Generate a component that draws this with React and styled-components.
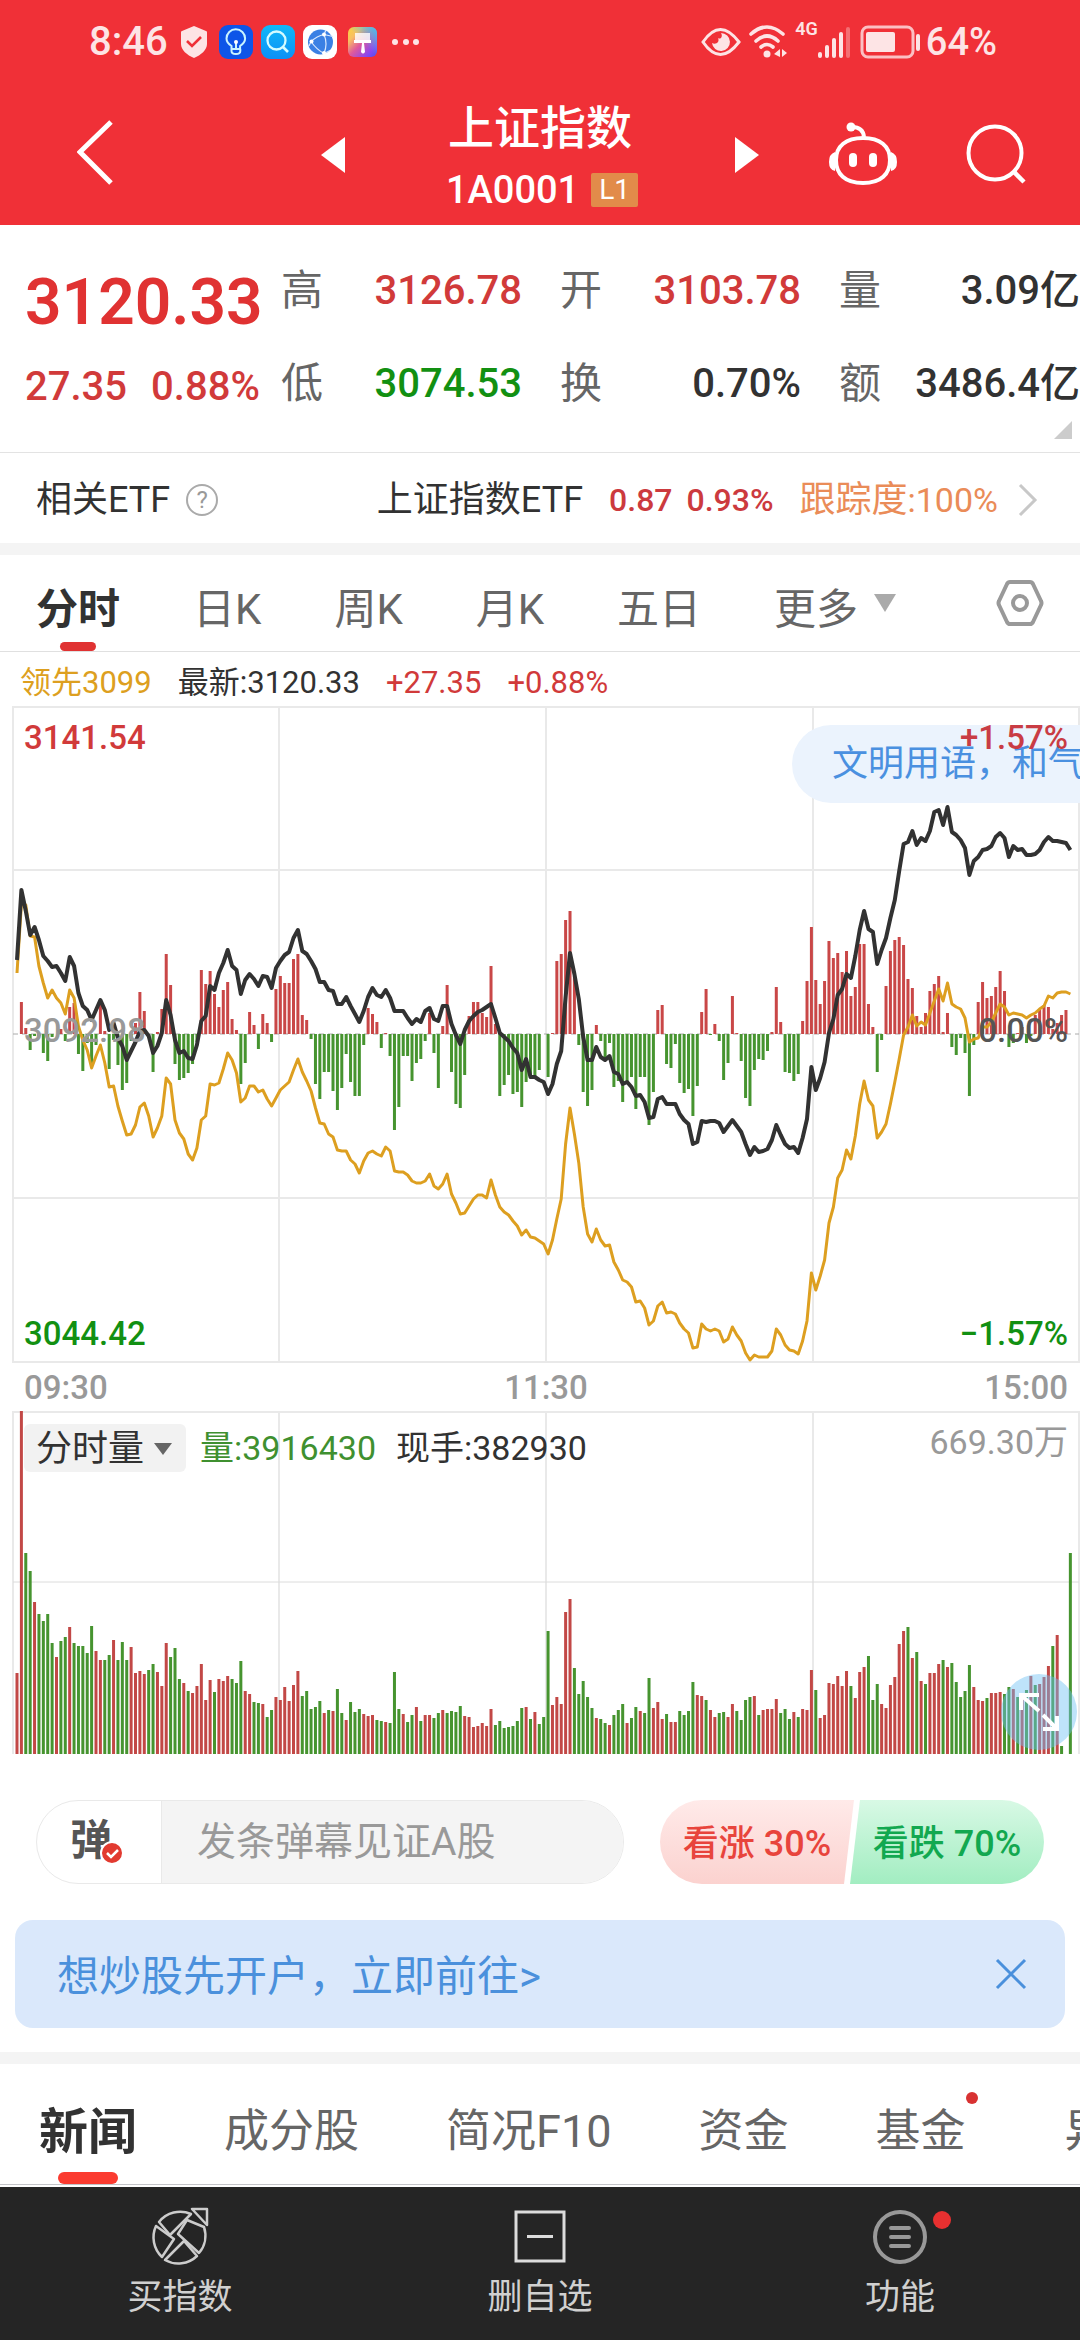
import styled, { createGlobalStyle } from "styled-components";

const PRICE = [
    74, 144, 123, 99, 107, 94, 78, 73, 67, 68, 61, 53, 77, 68, 41, 28, 24, 14, 24, 34,
    24, 4, 11, -4, -12, -26, -17, -8, 3, 4, -2, -19, -12, 1, 34, 19, -6, -19, -17, -24,
    -25, -11, 13, 18, 48, 44, 61, 71, 84, 68, 64, 40, 54, 60, 55, 48, 58, 57, 46, 66,
    73, 79, 82, 96, 104, 83, 80, 73, 65, 52, 52, 44, 43, 30, 30, 37, 28, 20, 12, 23,
    37, 46, 39, 37, 44, 36, 23, 23, 23, 16, 10, 15, 12, 23, 26, 15, 13, 28, 28, 10,
    -1, -10, 4, 13, 18, 22, 24, 27, 30, 16, 1, -3, -7, -14, -19, -36, -25, -43, -43, -46,
    -48, -60, -50, -30, -17, 37, 81, 60, 35, -3, -26, -26, -13, -23, -26, -22, -38, -40, -50, -48,
    -53, -62, -61, -68, -84, -83, -65, -63, -70, -70, -70, -80, -86, -90, -110, -108, -87, -88, -87, -87,
    -89, -98, -92, -86, -92, -98, -110, -121, -113, -118, -117, -115, -106, -91, -101, -110, -114, -113, -119, -104,
    -85, -33, -56, -44, -28, 1, 15, 39, 45, 60, 56, 78, 104, 123, 105, 102, 70, 84, 96, 116,
    134, 163, 190, 192, 203, 189, 196, 193, 203, 222, 224, 209, 227, 202, 199, 194, 186, 159, 173, 177,
    184, 185, 188, 197, 201, 196, 177, 188, 184, 185, 179, 179, 180, 184, 192, 197, 193, 193, 192, 191,
    184,
];

const LEADING = [
    61, 130, 129, 98, 97, 68, 51, 36, 44, 36, 31, 20, 44, 36, 8, -6, -16, -34, -22, -11,
    -29, -53, -52, -72, -87, -101, -100, -91, -73, -69, -82, -103, -94, -82, -44, -50, -86, -99, -105, -120,
    -126, -114, -86, -82, -50, -51, -49, -35, -19, -26, -39, -68, -64, -52, -52, -58, -56, -65, -72, -64,
    -56, -52, -48, -36, -25, -38, -47, -57, -74, -89, -90, -100, -103, -116, -117, -117, -126, -130, -139, -127,
    -119, -117, -120, -122, -113, -117, -137, -138, -138, -141, -147, -149, -149, -147, -140, -152, -155, -150, -140, -160,
    -169, -180, -179, -172, -165, -161, -161, -164, -146, -161, -173, -178, -181, -187, -192, -201, -196, -203, -204, -207,
    -210, -220, -206, -185, -165, -110, -74, -100, -129, -173, -200, -208, -195, -206, -212, -211, -228, -236, -246, -248,
    -253, -268, -267, -274, -291, -287, -272, -268, -279, -278, -280, -289, -295, -299, -314, -313, -290, -295, -297, -295,
    -297, -308, -305, -293, -301, -307, -319, -326, -321, -323, -323, -323, -317, -295, -301, -311, -316, -317, -320, -307,
    -287, -239, -256, -242, -226, -189, -173, -144, -136, -116, -125, -102, -70, -47, -66, -72, -104, -98, -90, -70,
    -48, -25, -1, 7, 19, 8, 12, 9, 21, 33, 45, 33, 51, 30, 27, 25, 16, -8, -5, -4,
    7, 7, 12, 21, 30, 27, 19, 21, 20, 19, 16, 19, 21, 25, 28, 38, 36, 41, 42, 42,
    40,
];

const MOMENTUM = [
    0, 32, 6, -16, -2, -2, -19, -27, -3, 0, 5, -7, 27, 31, -20, -37, -9, -32, -11, 29,
    3, -35, -6, -31, -56, -49, -7, 11, 42, 23, -4, -38, 2, 25, 80, 49, -30, -46, -44, -39,
    -30, -8, 64, 50, 63, 40, 27, 44, 52, 15, 4, -50, -29, 22, 9, -15, 20, 11, -8, 45,
    58, 51, 51, 75, 80, 19, 14, -5, -50, -65, -38, -38, -57, -76, -54, -20, -48, -62, -62, -11,
    26, 20, 12, -14, 1, -22, -96, -73, -22, -22, -47, -29, -25, -7, 21, -19, -54, 8, 49, -38,
    -70, -74, -41, 18, 32, 32, 21, 17, 68, 10, -62, -51, -41, -60, -58, -73, -48, -42, -43, -36,
    0, -43, 1, 73, 80, 114, 123, 58, -11, -58, -72, -56, 9, -7, -25, -9, -53, -47, -68, -50,
    -43, -75, -43, -43, -91, -58, 24, 29, -30, -34, -10, -49, -59, -55, -82, -52, 22, 45, -1, 10,
    -7, -46, -29, 38, 1, -27, -64, -72, -36, -25, -26, -17, 2, 47, 12, -38, -39, -47, -40, 13,
    53, 107, 54, 30, 53, 93, 76, 81, 62, 83, 38, 47, 90, 90, 30, 7, -38, -6, 48, 83,
    94, 97, 89, 55, 46, 18, 7, 21, 43, 50, 58, 2, 21, -13, -21, -4, -19, -62, -11, 32,
    52, 36, 38, 47, 63, 43, -13, -9, 1, 7, -9, -2, 19, 24, 29, 27, 5, 11, 19, 24,
    0,
];

// negative = traded on a falling minute
const VOLUME = [
    81, 343, -201, -183, 152, -140, -133, -140, -111, 97, -113, -117, 127, -111, -108, -108, -101, -128, 103, 94,
    -94, -99, 114, -94, -112, -94, 107, 81, 83, 80, -84, -90, 82, 68, 111, -97, -106, -75, 71, -63,
    61, 68, 90, 54, 74, -62, 75, 73, 78, -75, -71, -93, 63, 60, -52, -51, 50, -37, -44, 57,
    54, 67, 53, 69, 83, -58, -63, -45, -47, -53, 41, -44, 43, -65, -41, 34, -52, -42, -45, 40,
    38, 39, -34, -33, 32, -31, -82, -45, 40, -32, -39, 47, -33, 39, 39, -36, -41, 44, -41, -43,
    -42, -48, 38, 37, 27, 28, 31, 28, 45, -29, -33, -26, -27, -28, -33, -46, 47, -35, 42, -30,
    -37, -123, 49, 57, 50, 142, 155, -86, -60, -73, -57, -46, 36, -35, -31, 29, -39, -44, -50, 31,
    -36, -47, 43, -41, -76, 46, 52, 35, -40, 32, 32, -43, -39, -43, -72, 59, 58, -54, 44, 37,
    -41, -42, 37, 50, -43, -34, -54, -57, 58, -39, 44, 45, 45, 55, -41, -45, -35, 42, -37, 45,
    44, 84, -64, 36, 39, 71, 70, 78, 68, 83, -68, 56, 82, 87, -98, -54, -70, 50, 46, 69,
    77, 110, 123, -127, 96, -102, 73, -70, 81, 81, 90, -94, 87, -91, -72, -57, -63, -89, 67, 54,
    53, -56, 61, 61, 62, -60, -67, 65, -57, 61, -64, 78, -69, 70, 77, 88, -108, 119, -8, 0,
    -201,
];

const STEP = 4.389;
const px = (i) => 5 + i * STEP;
const line = (data) => data.map((v, i) => `${px(i).toFixed(1)},${328 - v}`).join(" ");

const QUOTES = [
    { label: "高", value: "3126.78", color: "#d13a3a" },
    { label: "开", value: "3103.78", color: "#d13a3a" },
    { label: "量", value: "3.09亿", color: "#323232" },
    { label: "低", value: "3074.53", color: "#129012" },
    { label: "换", value: "0.70%", color: "#323232" },
    { label: "额", value: "3486.4亿", color: "#323232" },
];

function StatusBar() {
    return (
        <Status>
            <StatusGroup>
                <Clock>8:46</Clock>
                <Shield viewBox="0 0 28 34">
                    <path d="M14 1l12 5c1 0 1 1 1 2v11c0 6-6 11-13 14C7 30 1 25 1 19V8c0-1 0-2 1-2z" fill="#fde4e5" />
                    <path d="M7 16l5 5 9-9" fill="none" stroke="#ef3038" strokeWidth="2.6" />
                </Shield>
                <svg width="34" height="34" viewBox="0 0 34 34">
                    <rect width="34" height="34" rx="9" fill="#0d55e8" />
                    <path d="M12.5 24v-3c-3-2-5-4-5-7.5a9.3 9.3 0 0 1 18.6 0c0 3.5-2 5.5-5 7.5v3zM12.5 24v2q0 3 4.4 3t4.4-3v-2M17 24v-8" fill="none" stroke="#c9f3ff" strokeWidth="2" />
                    <circle cx="17" cy="17" r="2" fill="#fff" />
                </svg>
                <svg width="34" height="34" viewBox="0 0 34 34">
                    <defs>
                        <linearGradient id="sky" x1="0" y1="0" x2="0" y2="1">
                            <stop offset="0" stopColor="#10b8f8" />
                            <stop offset="1" stopColor="#0c90f6" />
                        </linearGradient>
                    </defs>
                    <rect width="34" height="34" rx="9" fill="url(#sky)" />
                    <circle cx="15.5" cy="15.5" r="9" fill="none" stroke="#d3fbff" strokeWidth="2.3" />
                    <path d="M22 22l5 5" stroke="#d3fbff" strokeWidth="2.6" />
                </svg>
                <svg width="34" height="34" viewBox="0 0 34 34">
                    <rect width="34" height="34" rx="9" fill="#fff" />
                    <circle cx="17.5" cy="17" r="12.5" fill="#3a80e4" />
                    <path d="M8 16.5Q14 11 21 9.5L23 5M8 16.5Q13 24 21 28.5M21 9.5q4 9 0 19M21 9.5l9 2M6 21l2-4.5M21 28.5l6-3" fill="none" stroke="#d8e8ff" strokeWidth="1.2" />
                    <circle cx="8.5" cy="16.5" r="2" fill="#fff" />
                    <circle cx="21" cy="9.5" r="2" fill="#fff" />
                    <circle cx="21" cy="28" r="2" fill="#fff" />
                </svg>
                <svg width="34" height="34" viewBox="0 0 34 34">
                    <defs>
                        <linearGradient id="theme" x1="0" y1="0" x2="1" y2="1">
                            <stop offset="0" stopColor="#fbd33c" />
                            <stop offset="0.25" stopColor="#f9be62" />
                            <stop offset="0.5" stopColor="#e05a9c" />
                            <stop offset="0.8" stopColor="#8a46f0" />
                            <stop offset="1" stopColor="#4a50f0" />
                        </linearGradient>
                        <linearGradient id="cyan" x1="0" y1="1" x2="1" y2="0">
                            <stop offset="0.5" stopColor="#38c8f4" stopOpacity="0" />
                            <stop offset="1" stopColor="#38c8f4" />
                        </linearGradient>
                    </defs>
                    <rect x="3" y="2" width="29" height="30" rx="6" fill="url(#theme)" />
                    <rect x="3" y="2" width="29" height="30" rx="6" fill="url(#cyan)" />
                    <path d="M10 8h15v7H10z" fill="#fff" opacity="0.8" />
                    <path d="M9 15h17v3h-7l1 9q-2 3-4 0l1-9H9z" fill="#fff" />
                </svg>
                <Dots viewBox="0 0 28 8">
                    <circle cx="4" cy="4" r="3" />
                    <circle cx="15" cy="4" r="3" />
                    <circle cx="25" cy="4" r="3" />
                </Dots>
            </StatusGroup>
            <StatusGroup>
                <svg width="40" height="30" viewBox="0 0 40 30">
                    <path d="M2 15Q19-10 38 15Q19 40 2 15z" fill="none" stroke="#fde4e5" strokeWidth="3" />
                    <path d="M20 6a9 9 0 1 1-9 10c4 2 8-1 6-5 3 2 5-2 3-5z" fill="#fde4e5" />
                </svg>
                <svg width="38" height="34" viewBox="0 0 38 34">
                    <g fill="none" stroke="#fde4e5" strokeWidth="3.6" strokeLinecap="round">
                        <path d="M2 9Q18-5 34 9" />
                        <path d="M7 16Q18 6 29 16" />
                        <path d="M12 22Q18 17 24 22" />
                    </g>
                    <circle cx="18" cy="29" r="3.5" fill="#fde4e5" />
                    <path d="M31 24v8l-6-3zM33 24v8l5-4z" fill="#fde4e5" />
                </svg>
                <Network>4G</Network>
                <svg width="34" height="34" viewBox="0 0 34 34">
                    <g fill="#fde4e5">
                        <rect x="0" y="27" width="4" height="6" rx="2" />
                        <rect x="7" y="20" width="4" height="13" rx="2" />
                        <rect x="14" y="13" width="4" height="20" rx="2" />
                        <rect x="21" y="7" width="4" height="26" rx="2" />
                        <rect x="28" y="2" width="4" height="31" rx="2" opacity="0.35" />
                    </g>
                </svg>
                <svg width="62" height="34" viewBox="0 0 62 34">
                    <rect x="2" y="2" width="51" height="30" rx="6" fill="none" stroke="#fbc0c3" strokeWidth="3" />
                    <rect x="6" y="7" width="29" height="20" rx="2" fill="#fde4e5" />
                    <rect x="56" y="9" width="4" height="17" rx="2" fill="#fde4e5" />
                </svg>
                <Battery>64%</Battery>
            </StatusGroup>
        </Status>
    );
}

function MinuteChart() {
    return (
        <Chart>
            <svg viewBox="0 0 1068 657">
                <path d="M1 1H1067V656H1zM1 164H1067M1 492H1067M267 1V656M534 1V656M801 1V656" fill="none" stroke="#e9e9e9" strokeWidth="2" />
                <path d="M1 328H1067" stroke="#aaa" strokeWidth="1" strokeDasharray="5 4" />
            </svg>
            <Bubble>文明用语，和气发言</Bubble>
            <svg viewBox="0 0 1068 657">
                {MOMENTUM.map((v, i) => (
                    <rect
                        key={i}
                        x={px(i) - 1.5}
                        y={v > 0 ? 328 - v : 328}
                        width="3"
                        height={Math.abs(v)}
                        fill={v > 0 ? "#c94747" : "#46942f"}
                    />
                ))}
                <polyline points={line(LEADING)} fill="none" stroke="#dd9f20" strokeWidth="3" strokeLinejoin="round" />
                <polyline points={line(PRICE)} fill="none" stroke="#323232" strokeWidth="4" strokeLinejoin="round" />
            </svg>
            <Scale $side="left" $top={11} $color="#d13a3a">3141.54</Scale>
            <Scale $side="right" $top={11} $color="#c93c44">+1.57%</Scale>
            <Scale $side="left" $top={304} $color="#999">3092.98</Scale>
            <Scale $side="right" $top={304} $color="#555">0.00%</Scale>
            <Scale $side="left" $top={607} $color="#129012">3044.42</Scale>
            <Scale $side="right" $top={607} $color="#129012">−1.57%</Scale>
        </Chart>
    );
}

function VolumeChart() {
    return (
        <Chart>
            <svg viewBox="0 0 1068 343">
                <path d="M1 343V1H1067V343M267 1V343M534 1V343M801 1V343" fill="none" stroke="#e9e9e9" strokeWidth="2" />
                <path d="M1 171H1067" stroke="#dcdcdc" strokeWidth="1" />
                {VOLUME.map((v, i) => (
                    <rect
                        key={i}
                        x={px(i) - 1.5}
                        y={343 - Math.abs(v)}
                        width="3"
                        height={Math.abs(v)}
                        fill={v > 0 ? "#c24846" : "#46942f"}
                    />
                ))}
            </svg>
            <VolumeHead>
                <VolumePicker type="button">
                    分时量
                    <svg width="18" height="12" viewBox="0 0 18 12">
                        <path d="M0 0h18L9 12z" fill="#666" />
                    </svg>
                </VolumePicker>
                <VolumeText $color="#3f9030">量:3916430</VolumeText>
                <VolumeText $color="#323232">现手:382930</VolumeText>
                <VolumeMax>669.30万</VolumeMax>
            </VolumeHead>
            <Expand type="button" aria-label="全屏">
                <svg width="42" height="42" viewBox="0 0 42 42">
                    <path d="M3 19V4h18M4 5l17 15M39 25v13H25M38 37L25 24" fill="none" stroke="#fff" strokeWidth="4" />
                </svg>
            </Expand>
        </Chart>
    );
}

export default function App() {
    return (
        <Page>
            <GlobalStyle />
            <Header>
                <StatusBar />
                <Nav>
                    <NavSide $left>
                        <IconButton type="button" aria-label="返回">
                            <svg width="36" height="72" viewBox="0 0 36 72">
                                <path d="M34 3L3 33l31 31" fill="none" stroke="#fff" strokeWidth="5" />
                            </svg>
                        </IconButton>
                        <IconButton type="button" aria-label="上一个">
                            <svg width="24" height="36" viewBox="0 0 24 36">
                                <path d="M24 0v36L0 18z" fill="#fff" />
                            </svg>
                        </IconButton>
                    </NavSide>
                    <Title>
                        <h1>上证指数</h1>
                        <p>
                            1A0001 <Level>L1</Level>
                        </p>
                    </Title>
                    <NavSide>
                        <IconButton type="button" aria-label="下一个">
                            <svg width="24" height="36" viewBox="0 0 24 36">
                                <path d="M0 0v36l24-18z" fill="#fff" />
                            </svg>
                        </IconButton>
                        <IconButton type="button" aria-label="助手">
                            <svg width="70" height="66" viewBox="0 0 70 66">
                                <path d="M35 16C52 16 62 24 62 38S53 61 35 61S8 52 8 38S18 16 35 16z" fill="none" stroke="#fff" strokeWidth="4" />
                                <path d="M24 5Q35 5 36 15" fill="none" stroke="#fff" strokeWidth="4" />
                                <circle cx="23" cy="5" r="4.5" fill="#fff" />
                                <path d="M7 30v19q-6-1-6-9t6-10zM63 30v19q6-1 6-9t-6-10z" fill="#fff" />
                                <rect x="21" y="31" width="8" height="14" rx="4" fill="#fff" />
                                <rect x="41" y="31" width="8" height="14" rx="4" fill="#fff" />
                            </svg>
                        </IconButton>
                        <IconButton type="button" aria-label="搜索">
                            <svg width="60" height="62" viewBox="0 0 60 62">
                                <circle cx="29" cy="29" r="26.5" fill="none" stroke="#fff" strokeWidth="4" />
                                <path d="M47 47l11 11" stroke="#fff" strokeWidth="4.5" />
                            </svg>
                        </IconButton>
                    </NavSide>
                </Nav>
            </Header>

            <Quote>
                <Current>
                    <strong>3120.33</strong>
                    <div>
                        <span>27.35</span>
                        <span>0.88%</span>
                    </div>
                </Current>
                <QuoteGrid>
                    {QUOTES.map((q) => (
                        <QuoteItem key={q.label} $color={q.color}>
                            <dt>{q.label}</dt>
                            <dd>{q.value}</dd>
                        </QuoteItem>
                    ))}
                </QuoteGrid>
                <Corner viewBox="0 0 18 18">
                    <path d="M18 0v18H0z" fill="#ccc" />
                </Corner>
            </Quote>

            <Etf>
                <span>相关ETF</span>
                <Help type="button" aria-label="说明">?</Help>
                <EtfLink href="#etf">
                    <span>上证指数ETF</span>
                    <EtfNumbers>
                        <span>0.87</span>
                        <span>0.93%</span>
                    </EtfNumbers>
                    <Track>
                        跟踪度<span>:100%</span>
                    </Track>
                    <svg width="20" height="34" viewBox="0 0 20 34">
                        <path d="M2 2l15 15L2 32" fill="none" stroke="#c8c8c8" strokeWidth="3" />
                    </svg>
                </EtfLink>
            </Etf>
            <Divider />

            <Periods>
                <Period type="button" $active>分时</Period>
                <Period type="button">日K</Period>
                <Period type="button">周K</Period>
                <Period type="button">月K</Period>
                <Period type="button">五日</Period>
                <Period type="button">
                    更多
                    <svg width="22" height="18" viewBox="0 0 22 18">
                        <path d="M0 0h22L11 18z" fill="#aaa" />
                    </svg>
                </Period>
                <Settings type="button" aria-label="设置">
                    <svg width="48" height="46" viewBox="0 0 48 46">
                        <path d="M14 2h20q2 0 3 2l8 17q1 2 0 4l-8 17q-1 2-3 2H14q-2 0-3-2L3 25q-1-2 0-4l8-17q1-2 3-2z" fill="none" stroke="#999" strokeWidth="4" />
                        <circle cx="24" cy="23" r="7" fill="none" stroke="#999" strokeWidth="4" />
                    </svg>
                </Settings>
            </Periods>

            <Legend>
                <LegendText $color="#dd9f20">领先3099</LegendText>
                <LegendText $color="#323232">最新:3120.33</LegendText>
                <LegendText $color="#d13a3a">+27.35</LegendText>
                <LegendText $color="#d13a3a">+0.88%</LegendText>
            </Legend>
            <MinuteChart />
            <TimeAxis>
                <span>09:30</span>
                <span>11:30</span>
                <span>15:00</span>
            </TimeAxis>
            <VolumeChart />

            <Vote>
                <Barrage>
                    <BarrageToggle type="button">
                        弹
                        <svg width="24" height="24" viewBox="0 0 24 24">
                            <circle cx="12" cy="12" r="11" fill="#e23a30" stroke="#fff" strokeWidth="2" />
                            <path d="M7 12l4 4 7-7" fill="none" stroke="#fff" strokeWidth="2.5" />
                        </svg>
                    </BarrageToggle>
                    <BarrageInput aria-label="弹幕" placeholder="发条弹幕见证A股" />
                </Barrage>
                <Poll>
                    <PollButton type="button">看涨 30%</PollButton>
                    <PollButton type="button" $down>看跌 70%</PollButton>
                </Poll>
            </Vote>

            <Banner>
                <a href="#open">想炒股先开户，立即前往&gt;</a>
                <IconButton type="button" aria-label="关闭">
                    <svg width="32" height="32" viewBox="0 0 32 32">
                        <path d="M2 2l28 28M30 2L2 30" fill="none" stroke="#4a90dc" strokeWidth="3" />
                    </svg>
                </IconButton>
            </Banner>
            <Divider />

            <Sections>
                <Section type="button" $active>新闻</Section>
                <Section type="button">成分股</Section>
                <Section type="button">简况F10</Section>
                <Section type="button">资金</Section>
                <Section type="button" $dot>基金</Section>
                <Section type="button">异动</Section>
            </Sections>

            <BottomBar>
                <BottomItem type="button">
                    <svg width="60" height="60" viewBox="0 0 60 60">
                        <g fill="none" stroke="#ccc" strokeWidth="2.5" strokeLinejoin="round">
                            <path d="M9 15A27 27 0 0 1 41 7L20 28z" />
                            <path d="M6 19L24 32L12 50A27 27 0 0 1 6 19z" />
                            <path d="M15 53L34 34L47 49A27 27 0 0 1 15 53z" />
                            <path d="M37 13L28 27L49 46A27 27 0 0 0 54 20z" />
                            <path d="M42 2H57V18z" />
                        </g>
                    </svg>
                    买指数
                </BottomItem>
                <BottomItem type="button">
                    <svg width="60" height="60" viewBox="0 0 60 60">
                        <path d="M6 5H54V54H6zM17 29.5H43" fill="none" stroke="#dcdcdc" strokeWidth="3" />
                    </svg>
                    删自选
                </BottomItem>
                <BottomItem type="button" $dot>
                    <svg width="60" height="60" viewBox="0 0 60 60">
                        <circle cx="30" cy="30" r="25" fill="none" stroke="#999" strokeWidth="4" />
                        <path d="M21 21H39M21 30H39M21 39H39" stroke="#999" strokeWidth="4" strokeLinecap="round" />
                    </svg>
                    功能
                </BottomItem>
            </BottomBar>
        </Page>
    );
}

const GlobalStyle = createGlobalStyle`
    * {
        box-sizing: border-box;
        margin: 0;
        padding: 0;
    }
    body {
        background: #fff;
        color: #323232;
        font-family: Roboto, "Noto Sans CJK SC", sans-serif;
        overflow-x: hidden;
    }
    button, input {
        border: none;
        background: none;
        color: inherit;
        font: inherit;
    }
    a {
        color: inherit;
        text-decoration: none;
    }
    svg {
        display: block;
        flex-shrink: 0;
    }
`;

const Page = styled.div`
    width: 100%;
    overflow: hidden;
`;

const Header = styled.header`
    background: #f03037;
    color: #fff;
`;

const Status = styled.div`
    display: flex;
    justify-content: space-between;
    align-items: center;
    height: 84px;
    padding: 0 83px 0 89px;
    color: #fde4e5;
`;

const StatusGroup = styled.div`
    display: flex;
    align-items: center;
    gap: 8px;
`;

const Clock = styled.span`
    margin-right: 4px;
    font-size: 40px;
    line-height: 48px;
    font-weight: 500;
`;

const Shield = styled.svg`
    width: 28px;
    height: 34px;
    margin-right: 3px;
`;

const Dots = styled.svg`
    width: 28px;
    height: 8px;
    margin-left: 4px;
    fill: #fde4e5;
`;

const Network = styled.span`
    align-self: flex-start;
    margin-right: -8px;
    font-size: 18px;
    line-height: 22px;
    font-weight: 600;
`;

const Battery = styled.span`
    margin-left: -4px;
    font-size: 38px;
    line-height: 48px;
    font-weight: 500;
`;

const Nav = styled.nav`
    display: grid;
    grid-template-columns: 1fr 390px 1fr;
    align-items: center;
    height: 141px;
`;

const NavSide = styled.div`
    display: flex;
    align-items: center;
    justify-content: space-between;
    padding: ${(p) => (p.$left ? "0 0 0 77px" : "0 54px 0 0")};
`;

const IconButton = styled.button`
    display: flex;
    align-items: center;
`;

const Title = styled.div`
    padding-top: 8px;
    text-align: center;
    h1 {
        font-size: 46px;
        line-height: 62px;
        font-weight: 500;
    }
    p {
        display: flex;
        justify-content: center;
        align-items: center;
        gap: 12px;
        padding-left: 4px;
        font-size: 38px;
        line-height: 62px;
        font-weight: 500;
    }
`;

const Level = styled.span`
    padding: 0 8px;
    border-radius: 2px;
    background: #e28b4a;
    font-size: 28px;
    line-height: 34px;
    font-weight: 400;
`;

const Quote = styled.section`
    position: relative;
    display: flex;
    height: 228px;
    border-bottom: 1px solid #e3e3e3;
`;

const Current = styled.div`
    flex: 0 0 281px;
    padding: 44px 0 0 25px;
    color: #e03232;
    strong {
        display: block;
        font-size: 64px;
        line-height: 68px;
        font-weight: 600;
    }
    div {
        display: flex;
        gap: 24px;
        margin-top: 25px;
        color: #d13a3a;
        font-size: 40px;
        line-height: 50px;
        font-weight: 500;
    }
`;

const QuoteGrid = styled.dl`
    flex: 1;
    display: grid;
    grid-template-columns: repeat(3, 1fr);
    align-content: start;
    gap: 43px 38px;
    padding: 41px 0 0;
`;

const QuoteItem = styled.div`
    display: flex;
    justify-content: space-between;
    font-size: 40px;
    line-height: 50px;
    white-space: nowrap;
    dt {
        color: #666;
        font-size: 42px;
    }
    dd {
        color: ${(p) => p.$color};
        font-weight: 500;
    }
`;

const Corner = styled.svg`
    position: absolute;
    right: 8px;
    bottom: 13px;
    width: 18px;
    height: 18px;
`;

const Etf = styled.section`
    display: flex;
    align-items: center;
    height: 90px;
    padding: 4px 42px 0 36px;
    font-size: 36px;
    line-height: 50px;
`;

const Help = styled.button`
    width: 32px;
    height: 32px;
    margin-left: 16px;
    border: 2px solid #aaa;
    border-radius: 50%;
    color: #999;
    font-size: 24px;
    line-height: 28px;
`;

const EtfLink = styled.a`
    display: flex;
    align-items: center;
    gap: 26px;
    margin-left: auto;
    svg {
        margin-left: -6px;
    }
`;

const EtfNumbers = styled.span`
    display: flex;
    gap: 14px;
    color: #cc3a3e;
    font-size: 32px;
    font-weight: 500;
`;

const Track = styled.span`
    color: #ea8c58;
    span {
        font-size: 34px;
    }
`;

const Divider = styled.div`
    height: 12px;
    background: #f4f4f4;
`;

const Periods = styled.nav`
    display: flex;
    align-items: center;
    gap: 73px;
    height: 97px;
    padding: 0 36px;
    border-bottom: 1px solid #e0e0e0;
`;

const Period = styled.button`
    position: relative;
    display: flex;
    align-items: center;
    gap: 16px;
    height: 96px;
    padding-top: 4px;
    color: ${(p) => (p.$active ? "#323232" : "#666")};
    font-size: 42px;
    font-weight: ${(p) => (p.$active ? 700 : 400)};
    white-space: nowrap;
    svg {
        margin-bottom: 4px;
    }
    &::after {
        content: "";
        display: ${(p) => (p.$active ? "block" : "none")};
        position: absolute;
        left: 50%;
        bottom: 0;
        width: 36px;
        height: 9px;
        margin-left: -18px;
        border-radius: 5px;
        background: #e03232;
    }
`;

const Settings = styled.button`
    margin-left: auto;
`;

const Legend = styled.div`
    display: flex;
    gap: 26px;
    height: 54px;
    padding: 6px 20px 0;
`;

const LegendText = styled.span`
    color: ${(p) => p.$color};
    font-size: 31px;
    line-height: 50px;
`;

const Chart = styled.div`
    position: relative;
    margin-left: 12px;
    overflow: hidden;
    > svg {
        width: 100%;
    }
    > svg ~ svg {
        position: absolute;
        top: 0;
        left: 0;
    }
`;

const Scale = styled.span`
    position: absolute;
    top: ${(p) => p.$top}px;
    ${(p) => p.$side}: 12px;
    color: ${(p) => p.$color};
    font-size: 33px;
    line-height: 42px;
    font-weight: 500;
`;

const Bubble = styled.div`
    position: absolute;
    top: 19px;
    left: 780px;
    padding: 0 40px;
    border-radius: 39px;
    background: #ebf3fd;
    color: #4a90e0;
    font-size: 36px;
    line-height: 78px;
    white-space: nowrap;
`;

const TimeAxis = styled.div`
    display: flex;
    justify-content: space-between;
    padding: 1px 12px 0 24px;
    color: #999;
    font-size: 33px;
    line-height: 47px;
    font-weight: 500;
`;

const VolumeHead = styled.div`
    position: absolute;
    top: 12px;
    left: 12px;
    right: 12px;
    display: flex;
    align-items: center;
    font-size: 34px;
    line-height: 50px;
`;

const VolumePicker = styled.button`
    display: flex;
    align-items: center;
    gap: 10px;
    height: 48px;
    padding: 2px 14px 0 12px;
    border-radius: 6px;
    background: #f2f2f2;
    font-size: 36px;
`;

const VolumeText = styled.span`
    margin-left: 14px;
    color: ${(p) => p.$color};
    & + & {
        margin-left: 20px;
    }
`;

const VolumeMax = styled.span`
    align-self: flex-start;
    margin-left: auto;
    color: #999;
    line-height: 38px;
`;

const Expand = styled.button`
    position: absolute;
    right: 3px;
    bottom: 4px;
    display: flex;
    align-items: center;
    justify-content: center;
    width: 76px;
    height: 76px;
    border-radius: 50%;
    background: rgba(110, 192, 245, 0.45);
`;

const Vote = styled.section`
    display: flex;
    gap: 36px;
    padding: 46px 36px 36px;
`;

const Barrage = styled.div`
    flex: 1;
    display: flex;
    height: 84px;
    border: 1px solid #e9e9e9;
    border-radius: 42px;
    overflow: hidden;
`;

const BarrageToggle = styled.button`
    position: relative;
    flex: 0 0 125px;
    padding: 0 16px 12px 0;
    border-right: 1px solid #e9e9e9;
    color: #555;
    font-size: 42px;
    font-weight: 700;
    svg {
        position: absolute;
        left: 63px;
        top: 40px;
    }
`;

const BarrageInput = styled.input`
    flex: 1;
    min-width: 0;
    padding: 0 35px;
    background: #f4f4f4;
    font-size: 39px;
    outline: none;
    &::placeholder {
        color: #999;
        opacity: 1;
    }
`;

const Poll = styled.div`
    display: flex;
`;

const PollButton = styled.button`
    width: 194px;
    height: 84px;
    margin-left: ${(p) => (p.$down ? "-4px" : "0")};
    padding-bottom: 4px;
    border-radius: ${(p) => (p.$down ? "0 42px 42px 0" : "42px 0 0 42px")};
    background: ${(p) => (p.$down ? "linear-gradient(#d8f9e5, #a2edc1)" : "linear-gradient(#ffeae9, #fbd2cf)")};
    clip-path: ${(p) =>
        p.$down
            ? "polygon(10px 0, 100% 0, 100% 100%, 0 100%)"
            : "polygon(0 0, 100% 0, calc(100% - 10px) 100%, 0 100%)"};
    color: ${(p) => (p.$down ? "#12a850" : "#e8443c")};
    font-size: 36px;
    font-weight: 500;
`;

const Banner = styled.aside`
    display: flex;
    align-items: center;
    justify-content: space-between;
    height: 108px;
    margin: 0 15px 24px;
    padding: 0 38px 0 42px;
    border-radius: 18px;
    background: #dae8fb;
    color: #4a90dc;
    font-size: 42px;
    a {
        padding-bottom: 4px;
    }
`;

const Sections = styled.nav`
    display: flex;
    align-items: center;
    gap: 87px;
    height: 121px;
    margin-bottom: 2px;
    padding-left: 39px;
    border-bottom: 1px solid #c4c4c8;
`;

const Section = styled.button`
    position: relative;
    flex-shrink: 0;
    height: 120px;
    margin-right: ${(p) => (p.$dot ? "12px" : "0")};
    padding-top: 6px;
    color: ${(p) => (p.$active ? "#323232" : "#666")};
    font-size: ${(p) => (p.$active ? 49 : 45)}px;
    font-weight: ${(p) => (p.$active ? 700 : 400)};
    &::before {
        content: "";
        display: ${(p) => (p.$dot ? "block" : "none")};
        position: absolute;
        top: 28px;
        right: -12px;
        width: 12px;
        height: 12px;
        border-radius: 50%;
        background: #d83232;
    }
    &::after {
        content: "";
        display: ${(p) => (p.$active ? "block" : "none")};
        position: absolute;
        left: 50%;
        bottom: 0;
        width: 60px;
        height: 12px;
        margin-left: -30px;
        border-radius: 6px;
        background: #fb3b30;
    }
`;

const BottomBar = styled.footer`
    display: grid;
    grid-template-columns: repeat(3, 1fr);
    height: 153px;
    background: #252525;
    color: #d0d0d0;
`;

const BottomItem = styled.button`
    position: relative;
    display: flex;
    flex-direction: column;
    align-items: center;
    gap: 9px;
    padding-top: 20px;
    font-size: 35px;
    line-height: 44px;
    &::after {
        content: "";
        display: ${(p) => (p.$dot ? "block" : "none")};
        position: absolute;
        top: 24px;
        left: 50%;
        width: 18px;
        height: 18px;
        margin-left: 33px;
        border-radius: 50%;
        background: #e83030;
    }
`;
